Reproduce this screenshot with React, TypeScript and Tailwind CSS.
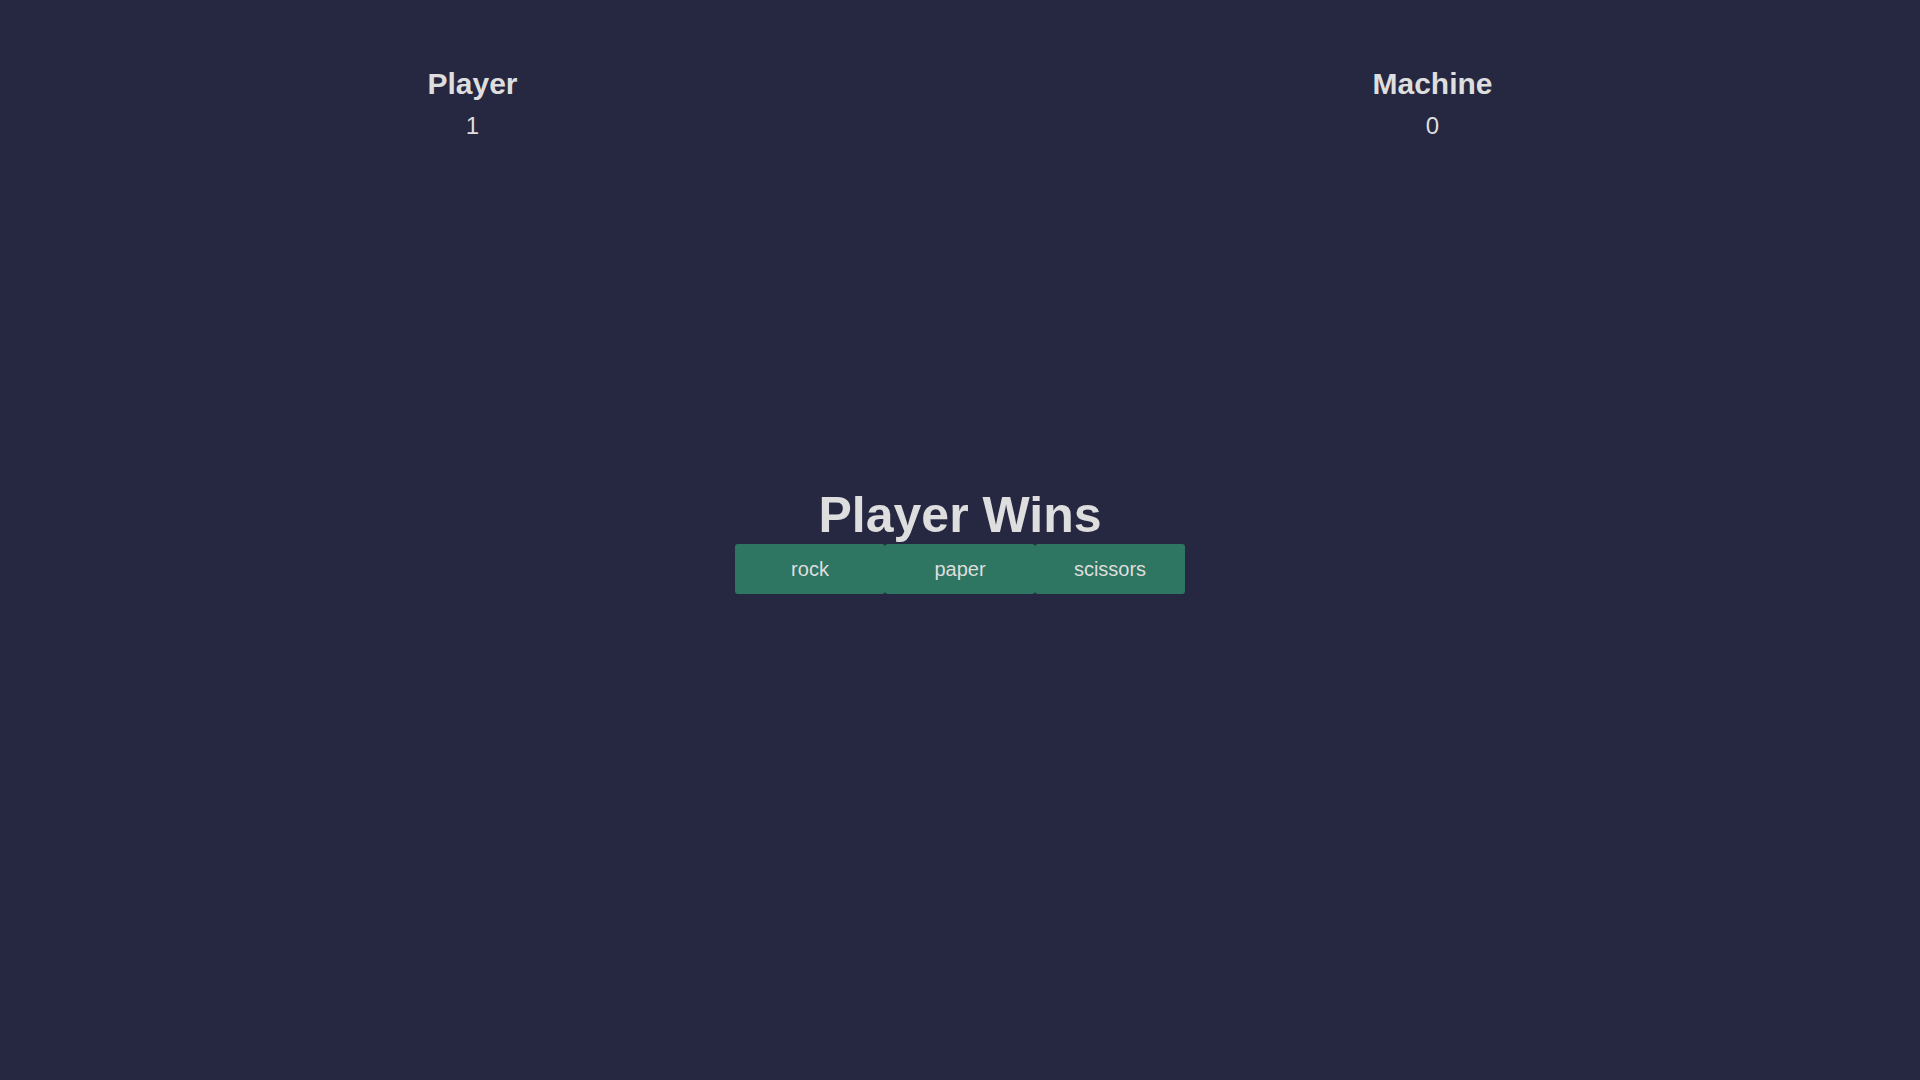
const choices = ['rock', 'paper', 'scissors'];

const scores = [
    {name: 'Player', value: 1},
    {name: 'Machine', value: 0},
];

export default function App() {
    return (
        <div className="h-screen grid grid-rows-[1fr_auto_1fr] bg-[#262842] text-[#dedede] font-['Liberation_Sans',Arial,sans-serif] leading-[normal]">
            {/* Scoreboard */}
            <div className="flex justify-around items-start pt-[67px]">
                {scores.map((score) => (
                    <div key={score.name} className="flex flex-col items-center">
                        <h2 className="text-[30px] font-bold leading-[normal]">{score.name}</h2>
                        <p className="mt-[11px] text-[24px] leading-[normal]">{score.value}</p>
                    </div>
                ))}
            </div>

            {/* Result and choices */}
            <div className="flex flex-col items-center">
                <h1 className="text-[50px] font-bold leading-[normal]">Player Wins</h1>
                <div className="flex">
                    {choices.map((choice) => (
                        <button
                            key={choice}
                            className="w-[150px] h-[50px] rounded-[3px] bg-[#2e7562] text-[20px] text-[#dedede] flex items-center justify-center"
                        >
                            {choice}
                        </button>
                    ))}
                </div>
            </div>

            <div />
        </div>
    );
}
